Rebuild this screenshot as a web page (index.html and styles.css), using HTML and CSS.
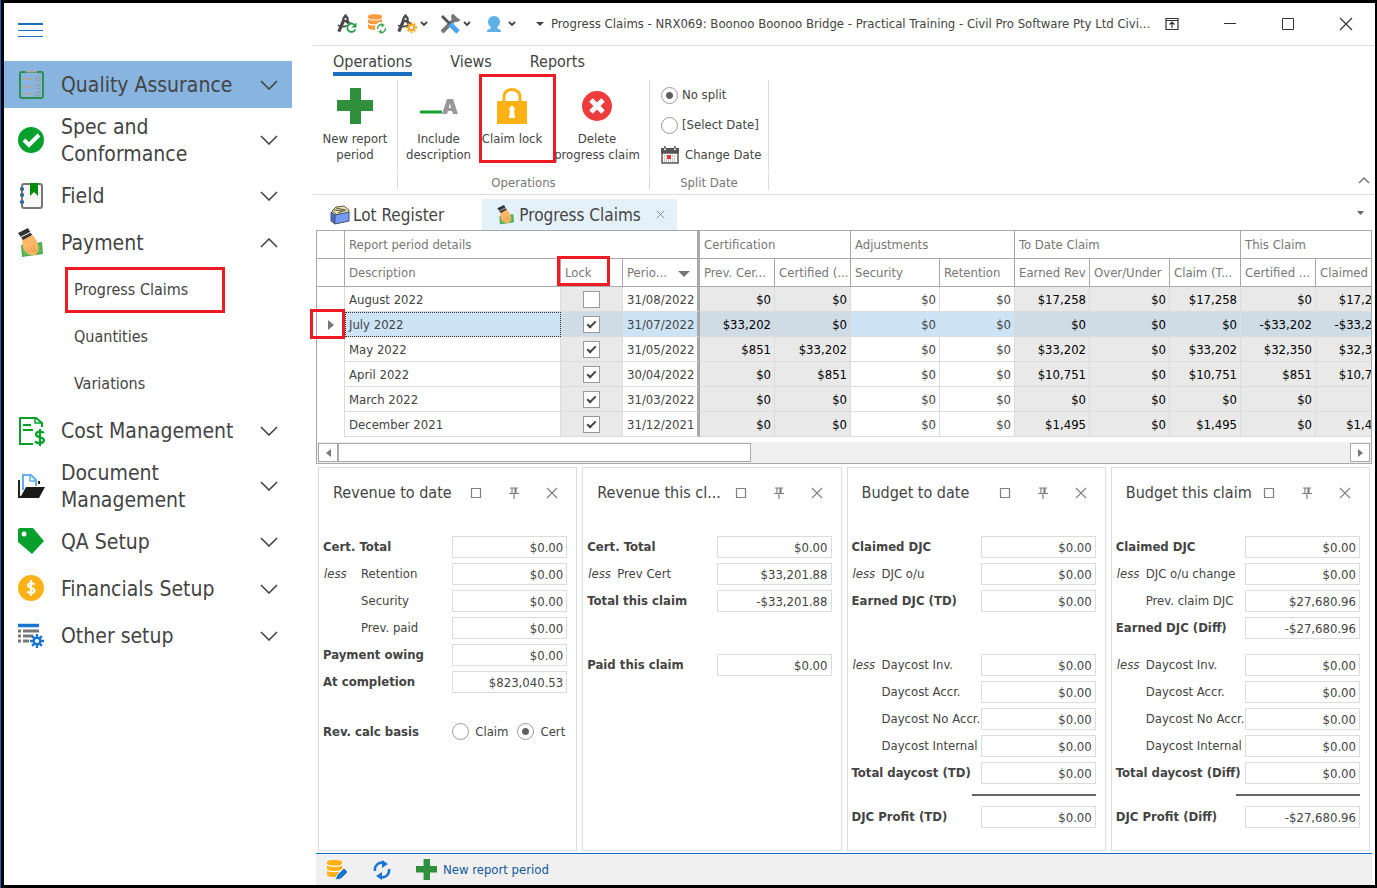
FILE: index.html
```html
<!DOCTYPE html>
<html lang="en">
<head>
  <meta charset="UTF-8">
  <meta name="viewport" content="width=device-width, initial-scale=1.0">
  <title>Progress Claims - Civil Pro</title>
  <link rel="stylesheet" href="styles.css">
</head>
<body>

<!-- Shared icons -->
<svg class="sprite" width="0" height="0">
  <symbol id="chevron" viewBox="0 0 18 10"><path d="M1 1l8 8 8-8" fill="none" stroke="#444" stroke-width="1.6"/></symbol>
  <symbol id="small-chevron" viewBox="0 0 8 6"><path d="M1 1l3 3 3-3" fill="none" stroke="#444" stroke-width="1.8"/></symbol>
  <symbol id="pay" viewBox="0 0 26 30">
    <path d="M3 17l21-3 1 12-21 3z" fill="#4caf50"/>
    <path d="M5 19l17-2 1 7-17 3z" fill="#66bb5a"/>
    <path d="M4 11l9-5c3 2 6 6 7 11 1 5 0 8-3 10-2 1-5 0-7-1l-4-4c-2-3-1-7-2-11z" fill="#ffb868"/>
    <path d="M9 21l3 4M12 19l4 6M15 17l3 7" fill="none" stroke="#e0913d" stroke-width="1"/>
    <path d="M0 5l10-5 4 7-9 5z" fill="#333"/>
    <path d="M3 9l10-5" stroke="#fff" stroke-width="1"/>
  </symbol>
  <symbol id="plus" viewBox="0 0 36 36"><path d="M13 0h11v12h12v11H24v13H13V23H0V12h13z" fill="#2f8f3a"/></symbol>
  <symbol id="max" viewBox="0 0 12 12"><path d="M1.500 1.500h9v9h-9z" fill="none" stroke="#808080" stroke-width="1.200"/></symbol>
  <symbol id="pin" viewBox="0 0 12 12"><path d="M2 1h8M4 1v5M8 1v5M7 1v5M1 6.500h10M6 7v5" fill="none" stroke="#808080" stroke-width="1.200"/></symbol>
  <symbol id="close" viewBox="0 0 12 12"><path d="M1 1l10 10M11 1L1 11" fill="none" stroke="#808080" stroke-width="1.200"/></symbol>
  <symbol id="compass" viewBox="0 0 20 20">
    <path d="M8 5L2 19M10 5l7 12" fill="none" stroke="#4a4a4a" stroke-width="3.600"/>
    <path d="M1 12c4 2 10 2 15-3" fill="none" stroke="#4a4a4a" stroke-width="2"/>
    <path d="M8 0h3v4H8z" fill="#4a4a4a"/>
    <circle cx="9.500" cy="5" r="3.500" fill="#4a4a4a"/><circle cx="9.500" cy="5" r="1.200" fill="#fff"/>
  </symbol>
  <symbol id="cycle" viewBox="0 0 20 20">
    <path d="M3 11a7 7 0 0 1 9-8M17 9a7 7 0 0 1-9 8" fill="none" stroke="currentColor" stroke-width="2.500"/>
    <path d="M10 0l6 4-6 4zM10 20l-6-4 6-4z" fill="currentColor"/>
  </symbol>
  <symbol id="reload" viewBox="0 0 20 20">
    <path d="M15 5a7.500 7.500 0 1 0 2 8" fill="none" stroke="currentColor" stroke-width="3"/>
    <path d="M19 1v9h-9z" fill="currentColor"/>
  </symbol>
  <symbol id="db" viewBox="0 0 16 18">
    <path d="M0 2.500C0 .8 3 0 8 0s8 .8 8 2.500V15c0 2-3 3-8 3s-8-1-8-3z" fill="currentColor"/>
    <path d="M0 4.500c1 3 15 3 16 0M0 10c1 3 15 3 16 0" fill="none" stroke="#fff" stroke-width="1.300"/>
  </symbol>
  <symbol id="gear" viewBox="0 0 20 20">
    <path d="M10 0v20M0 10h20M3 3l14 14M17 3L3 17" stroke="currentColor" stroke-width="3.400"/>
    <circle cx="10" cy="10" r="6.500" fill="currentColor"/><circle cx="10" cy="10" r="3" fill="#fff"/>
  </symbol>
</svg>

<div class="window">

  <nav class="sidebar">
    <button class="menu-btn" aria-label="Menu"><span></span><span></span><span></span></button>
    <ul>
      <li><a href="#" class="item active">
        <svg width="28" height="30" viewBox="0 0 28 30"><rect x="2" y="2" width="23" height="26" rx="2" fill="none" stroke="#2f8f4e" stroke-width="2"/><path d="M8 1.500h11M4 9h11M4 17h11M4 24h11" stroke="#a9a9a9" stroke-width="2"/><path d="M18 7h4v4h-4zM18 14.500h4v4h-4zM18 22h4v4h-4z" fill="none" stroke="#999"/></svg>
        <span>Quality Assurance</span><svg class="arrow"><use href="#chevron"/></svg></a></li>
      <li><a href="#" class="item tall">
        <svg width="28" height="28" viewBox="0 0 28 28"><circle cx="13" cy="14" r="13" fill="#08a02c"/><path d="M6 14l5 5 10-10" fill="none" stroke="#fff" stroke-width="4"/></svg>
        <span>Spec and Conformance</span><svg class="arrow"><use href="#chevron"/></svg></a></li>
      <li><a href="#" class="item">
        <svg width="28" height="28" viewBox="0 0 28 28"><rect x="4" y="2" width="20" height="24" rx="2" fill="#f7f7f7" stroke="#777" stroke-width="2"/><path d="M12 1h8v13l-4-4-4 4z" fill="#078a07"/><path d="M2 7h4M2 13h4M2 20h4" stroke="#31699c" stroke-width="3"/></svg>
        <span>Field</span><svg class="arrow"><use href="#chevron"/></svg></a></li>
      <li><a href="#" class="item">
        <svg width="28" height="30"><use href="#pay" width="26" height="30"/></svg>
        <span>Payment</span><svg class="arrow up"><use href="#chevron"/></svg></a>
        <ul class="sub">
          <li class="marked"><a href="#">Progress Claims</a></li>
          <li><a href="#">Quantities</a></li>
          <li><a href="#">Variations</a></li>
        </ul>
      </li>
      <li><a href="#" class="item">
        <svg width="28" height="30" viewBox="0 0 28 30"><path d="M15 28H2V2h16l6 5v4" fill="none" stroke="#08a02c" stroke-width="2"/><path d="M17 1v6h8" fill="none" stroke="#08a02c" stroke-width="1.500"/><path d="M5 9h8M5 14h10" stroke="#08a02c" stroke-width="2"/><path d="M26 17c-2-2-8-2-8 1.500s8 2 8 5.500-6 4-9 1.500M22 13v17" fill="none" stroke="#08a02c" stroke-width="2.300"/></svg>
        <span>Cost Management</span><svg class="arrow"><use href="#chevron"/></svg></a></li>
      <li><a href="#" class="item tall">
        <svg width="28" height="28" viewBox="0 0 28 28"><path d="M1 8v17h5M21 12V9" fill="none" stroke="#222" stroke-width="2"/><path d="M5 18V3h8l5 5v6" fill="#fff" stroke="#60b0ee" stroke-width="2"/><path d="M12 3v6h6" fill="none" stroke="#60b0ee" stroke-width="1.500"/><path d="M8 15h19l-6 11H2z" fill="#1a1a1a"/></svg>
        <span>Document Management</span><svg class="arrow"><use href="#chevron"/></svg></a></li>
      <li><a href="#" class="item">
        <svg width="28" height="28" viewBox="0 0 28 28"><path fill-rule="evenodd" d="M2 0h13l11 13-12 13L0 14V2c0-1 1-2 2-2zM6 3.500a2.500 2.500 0 1 0 .1 0z" fill="#08a02c"/></svg>
        <span>QA Setup</span><svg class="arrow"><use href="#chevron"/></svg></a></li>
      <li><a href="#" class="item">
        <svg width="28" height="28" viewBox="0 0 28 28"><circle cx="13" cy="13" r="13" fill="#ffb115"/><path d="M16.500 9.500c-2-2-7-1.500-6.500 1 .5 2.500 6.500 2 6.500 5 0 3-5 3-7.500 1M13 5v16" fill="none" stroke="#fff" stroke-width="2.200"/></svg>
        <span>Financials Setup</span><svg class="arrow"><use href="#chevron"/></svg></a></li>
      <li><a href="#" class="item">
        <svg width="28" height="28" viewBox="0 0 28 28"><path d="M0 3.500h21" stroke="#1a75d2" stroke-width="3.500"/><path d="M0 9h3M5 9h16M0 14h3M5 14h10M0 19h3M5 19h6" stroke="#777" stroke-width="3"/><use href="#gear" x="12" y="12" width="14" height="14" color="#1a75d2"/></svg>
        <span>Other setup</span><svg class="arrow"><use href="#chevron"/></svg></a></li>
    </ul>
  </nav>

  <main class="main">
    <header class="titlebar">
      <div class="quick">
        <button aria-label="Sync project"><svg width="20" height="20"><use href="#compass" width="18" height="19"/><circle cx="14" cy="14" r="5" fill="#fff"/><use href="#reload" x="9" y="8" width="11" height="11" color="#1c9c3c"/></svg></button>
        <button aria-label="Refresh data"><svg width="20" height="20"><use href="#db" x="1" y="0" width="14" height="16" color="#ff9a3e"/><circle cx="14" cy="14" r="6" fill="#fff"/><use href="#cycle" x="9" y="9" width="11" height="11" color="#3aa655"/></svg></button>
        <button class="drop" aria-label="Project settings"><svg width="20" height="20"><use href="#compass" width="18" height="19"/><use href="#gear" x="9" y="8" width="11" height="11" color="#f5a623"/></svg><svg class="dd"><use href="#small-chevron"/></svg></button>
        <button class="drop" aria-label="Tools"><svg width="20" height="20" viewBox="0 0 20 20"><path d="M2 18L15 5" stroke="#777" stroke-width="4"/><path d="M13 1c-3 3 2 8 6 5l-2-1-2-2z" fill="#777" stroke="#777" stroke-width="2"/><path d="M2 2l8 8" stroke="#555" stroke-width="3"/><path d="M10 10l8 8" stroke="#4ea5f5" stroke-width="5"/></svg><svg class="dd"><use href="#small-chevron"/></svg></button>
        <button class="drop user" aria-label="User"><svg width="16" height="18" viewBox="0 0 16 18"><path d="M8 1c4 0 6 3 6 6 0 2-1 4-3 5l1 2c2 0 3 1 3 3H1c0-2 1-3 3-3l1-2C3 11 2 9 2 7c0-3 2-6 6-6z" fill="#5fb0e4"/></svg><svg class="dd"><use href="#small-chevron"/></svg></button>
        <button class="more" aria-label="Customise toolbar"><svg width="8" height="5" viewBox="0 0 8 5"><path d="M0 0h8L4 4z" fill="#444"/></svg></button>
      </div>
      <h1>Progress Claims - NRX069: Boonoo Boonoo Bridge - Practical Training - Civil Pro Software Pty Ltd Civi...</h1>
      <div class="win-buttons">
        <button aria-label="Ribbon options"><svg width="14" height="14" viewBox="0 0 14 14"><path d="M1 1.500h12v11H1zM1 3.500h12M7 11V5M4.500 7.500L7 5l2.500 2.500" fill="none" stroke="#333" stroke-width="1.200"/></svg></button>
        <button aria-label="Minimise"><svg width="14" height="14"><path d="M1 6.500h12" stroke="#333"/></svg></button>
        <button aria-label="Maximise"><svg width="14" height="14"><path d="M1.500 1.500h11v11h-11z" fill="none" stroke="#333"/></svg></button>
        <button aria-label="Close"><svg width="14" height="14"><path d="M1 1l12 12M13 1L1 13" stroke="#333" stroke-width="1.200"/></svg></button>
      </div>
    </header>

    <div class="ribbon-tabs">
      <a href="#" class="current">Operations</a>
      <a href="#">Views</a>
      <a href="#">Reports</a>
    </div>

    <section class="ribbon">
      <div class="group g-new">
        <div class="tools">
          <button class="tool"><svg width="36" height="36"><use href="#plus"/></svg>New report<br>period</button>
        </div>
        <div class="caption"></div>
      </div>
      <div class="group g-ops">
        <div class="tools">
          <button class="tool t-include"><svg width="40" height="36" viewBox="0 0 40 36"><path d="M1 24h22" stroke="#16a02c" stroke-width="3"/><path fill-rule="evenodd" d="M28 11h6l5 15h-5l-1-3h-4l-1 3h-5zM31 15l-1 5h2z" fill="#999"/></svg>Include<br>description</button>
          <button class="tool t-lock"><svg width="30" height="36" viewBox="0 0 30 36"><path d="M7 14V9c0-10 16-10 16 0v5" fill="none" stroke="#ffb115" stroke-width="3"/><path d="M1 13h28c1 0 1 0 1 1v21c0 1 0 1-1 1H1c-1 0-1 0-1-1V14c0-1 0-1 1-1z" fill="#ffb115"/><path d="M15 18a3 3 0 0 1 2 5l1 7h-6l1-7a3 3 0 0 1 2-5z" fill="#fff"/></svg>Claim lock</button>
          <button class="tool t-delete"><svg width="30" height="36" viewBox="0 0 30 36"><circle cx="15" cy="18" r="15" fill="#ee3b3b"/><path d="M9 12l12 12M21 12L9 24" stroke="#fff" stroke-width="5"/></svg>Delete<br>progress claim</button>
        </div>
        <div class="caption">Operations</div>
      </div>
      <div class="group g-split">
        <div class="options">
          <label><input type="radio" name="split" checked>No split</label>
          <label><input type="radio" name="split">[Select Date]</label>
          <button><svg width="18" height="18" viewBox="0 0 18 18"><path d="M1 7h16v10H1z" fill="#fff" stroke="#555" stroke-width="1.500"/><path d="M0 2h3v2h2V2h8v2h2V2h3v5H0z" fill="#555"/><path d="M4 0v3M14 0v3" stroke="#555" stroke-width="1.500"/><path d="M3 10h12M3 13h12M3 15h12" stroke="#888" stroke-dasharray="1 1"/><path d="M6 9h4v4H6z" fill="#e33"/></svg>Change Date</button>
        </div>
        <div class="caption">Split Date</div>
      </div>
      <button class="collapse" aria-label="Collapse ribbon"><svg width="12" height="8" viewBox="0 0 12 8"><path d="M1 7l5-5 5 5" fill="none" stroke="#777" stroke-width="1.500"/></svg></button>
    </section>

    <div class="doc-tabs">
      <a href="#" class="doc">
        <svg width="20" height="20" viewBox="0 0 20 20"><path d="M2 6l4-4 8-1 5 4-1 5-8 2z" fill="#f0e0a0" stroke="#555"/><path d="M4 5l9 1M6 3l9 2M8 8l8-3" stroke="#555"/><path d="M1 7l4 3v9l-4-3z" fill="#4a6bd8" stroke="#456"/><path d="M5 10l14-3v9L5 19z" fill="#7399f5" stroke="#456"/></svg>
        Lot Register</a>
      <a href="#" class="doc open">
        <svg width="20" height="20"><use href="#pay"/></svg>
        Progress Claims
        <svg class="x" width="9" height="9"><use href="#close"/></svg></a>
      <button class="doc-more" aria-label="More tabs"><svg width="7" height="4" viewBox="0 0 7 4"><path d="M0 0h7L3.500 4z" fill="#666"/></svg></button>
    </div>

    <div class="claims">
      <div class="grid-clip">
        <table>
          <colgroup>
            <col class="c28"><col class="c216"><col class="c62"><col class="c77"><col class="c75"><col class="c76"><col class="c89"><col class="c75"><col class="c75"><col class="c80"><col class="c71"><col class="c75"><col class="c75">
          </colgroup>
          <thead>
            <tr><th></th><th colspan="3" class="thick">Report period details</th><th colspan="2">Certification</th><th colspan="2">Adjustments</th><th colspan="3">To Date Claim</th><th colspan="2">This Claim</th></tr>
            <tr><th></th><th>Description</th><th>Lock</th><th class="thick">Perio...<svg class="sort" width="12" height="6" viewBox="0 0 12 6"><path d="M0 0h12L6 6z" fill="#777"/></svg></th><th>Prev. Cer...</th><th>Certified (...</th><th>Security</th><th>Retention</th><th>Earned Rev</th><th>Over/Under</th><th>Claim (T...</th><th>Certified ...</th><th>Claimed (...</th></tr>
          </thead>
          <tbody>
            <tr><td></td><td>August 2022</td><td><input type="checkbox" aria-label="Lock August 2022"></td><td>31/08/2022</td><td>$0</td><td>$0</td><td>$0</td><td>$0</td><td>$17,258</td><td>$0</td><td>$17,258</td><td>$0</td><td>$17,258</td></tr>
            <tr class="selected"><td><svg width="6" height="10" viewBox="0 0 6 10"><path d="M0 0l6 5-6 5z" fill="#777"/></svg></td><td>July 2022</td><td><input type="checkbox" aria-label="Lock July 2022" checked></td><td>31/07/2022</td><td>$33,202</td><td>$0</td><td>$0</td><td>$0</td><td>$0</td><td>$0</td><td>$0</td><td>-$33,202</td><td>-$33,202</td></tr>
            <tr><td></td><td>May 2022</td><td><input type="checkbox" aria-label="Lock May 2022" checked></td><td>31/05/2022</td><td>$851</td><td>$33,202</td><td>$0</td><td>$0</td><td>$33,202</td><td>$0</td><td>$33,202</td><td>$32,350</td><td>$32,350</td></tr>
            <tr><td></td><td>April 2022</td><td><input type="checkbox" aria-label="Lock April 2022" checked></td><td>30/04/2022</td><td>$0</td><td>$851</td><td>$0</td><td>$0</td><td>$10,751</td><td>$0</td><td>$10,751</td><td>$851</td><td>$10,751</td></tr>
            <tr><td></td><td>March 2022</td><td><input type="checkbox" aria-label="Lock March 2022" checked></td><td>31/03/2022</td><td>$0</td><td>$0</td><td>$0</td><td>$0</td><td>$0</td><td>$0</td><td>$0</td><td>$0</td><td>$0</td></tr>
            <tr><td></td><td>December 2021</td><td><input type="checkbox" aria-label="Lock December 2021" checked></td><td>31/12/2021</td><td>$0</td><td>$0</td><td>$0</td><td>$0</td><td>$1,495</td><td>$0</td><td>$1,495</td><td>$0</td><td>$1,495</td></tr>
          </tbody>
        </table>
        <div class="scroll">
          <button aria-label="Scroll left"><svg width="5" height="8" viewBox="0 0 5 8"><path d="M5 0v8L0 4z" fill="#777"/></svg></button>
          <div class="thumb"></div>
          <button aria-label="Scroll right"><svg width="5" height="8" viewBox="0 0 5 8"><path d="M0 0v8l5-4z" fill="#777"/></svg></button>
        </div>
      </div>
      <div class="mark mark-lock"></div>
      <div class="mark mark-row"></div>
    </div>

    <div class="panels">
      <section class="panel">
        <div class="panel-head"><h2>Revenue to date</h2><button aria-label="Maximise"><svg><use href="#max"/></svg></button><button aria-label="Pin"><svg><use href="#pin"/></svg></button><button aria-label="Close"><svg><use href="#close"/></svg></button></div>
        <div class="field"><label class="total" for="a1">Cert. Total</label><input id="a1" type="text" value="$0.00" readonly></div>
        <div class="field wide"><i>less</i><label for="a2">Retention</label><input id="a2" type="text" value="$0.00" readonly></div>
        <div class="field wide"><i></i><label for="a3">Security</label><input id="a3" type="text" value="$0.00" readonly></div>
        <div class="field wide"><i></i><label for="a4">Prev. paid</label><input id="a4" type="text" value="$0.00" readonly></div>
        <div class="field"><label class="total" for="a5">Payment owing</label><input id="a5" type="text" value="$0.00" readonly></div>
        <div class="field"><label class="total" for="a6">At completion</label><input id="a6" type="text" value="$823,040.53" readonly></div>
        <div class="basis"><b>Rev. calc basis</b>
          <label><input type="radio" name="basis">Claim</label>
          <label><input type="radio" name="basis" checked>Cert</label>
        </div>
      </section>

      <section class="panel">
        <div class="panel-head"><h2>Revenue this cl...</h2><button aria-label="Maximise"><svg><use href="#max"/></svg></button><button aria-label="Pin"><svg><use href="#pin"/></svg></button><button aria-label="Close"><svg><use href="#close"/></svg></button></div>
        <div class="field"><label class="total" for="b1">Cert. Total</label><input id="b1" type="text" value="$0.00" readonly></div>
        <div class="field"><i>less</i><label for="b2">Prev Cert</label><input id="b2" type="text" value="$33,201.88" readonly></div>
        <div class="field"><label class="total" for="b3">Total this claim</label><input id="b3" type="text" value="-$33,201.88" readonly></div>
        <div class="field space-lg"><label class="total" for="b4">Paid this claim</label><input id="b4" type="text" value="$0.00" readonly></div>
      </section>

      <section class="panel">
        <div class="panel-head"><h2>Budget to date</h2><button aria-label="Maximise"><svg><use href="#max"/></svg></button><button aria-label="Pin"><svg><use href="#pin"/></svg></button><button aria-label="Close"><svg><use href="#close"/></svg></button></div>
        <div class="field"><label class="total" for="c1">Claimed DJC</label><input id="c1" type="text" value="$0.00" readonly></div>
        <div class="field"><i>less</i><label for="c2">DJC o/u</label><input id="c2" type="text" value="$0.00" readonly></div>
        <div class="field"><label class="total" for="c3">Earned DJC (TD)</label><input id="c3" type="text" value="$0.00" readonly></div>
        <div class="field space-lg"><i>less</i><label for="c4">Daycost Inv.</label><input id="c4" type="text" value="$0.00" readonly></div>
        <div class="field"><i></i><label for="c5">Daycost Accr.</label><input id="c5" type="text" value="$0.00" readonly></div>
        <div class="field"><i></i><label for="c6">Daycost No Accr.</label><input id="c6" type="text" value="$0.00" readonly></div>
        <div class="field"><i></i><label for="c7">Daycost Internal</label><input id="c7" type="text" value="$0.00" readonly></div>
        <div class="field"><label class="total" for="c8">Total daycost (TD)</label><input id="c8" type="text" value="$0.00" readonly></div>
        <hr>
        <div class="field"><label class="total" for="c9">DJC Profit (TD)</label><input id="c9" type="text" value="$0.00" readonly></div>
      </section>

      <section class="panel">
        <div class="panel-head"><h2>Budget this claim</h2><button aria-label="Maximise"><svg><use href="#max"/></svg></button><button aria-label="Pin"><svg><use href="#pin"/></svg></button><button aria-label="Close"><svg><use href="#close"/></svg></button></div>
        <div class="field"><label class="total" for="d1">Claimed DJC</label><input id="d1" type="text" value="$0.00" readonly></div>
        <div class="field"><i>less</i><label for="d2">DJC o/u change</label><input id="d2" type="text" value="$0.00" readonly></div>
        <div class="field"><i></i><label for="d3">Prev. claim DJC</label><input id="d3" type="text" value="$27,680.96" readonly></div>
        <div class="field"><label class="total" for="d4">Earned DJC (Diff)</label><input id="d4" type="text" value="-$27,680.96" readonly></div>
        <div class="field space-sm"><i>less</i><label for="d5">Daycost Inv.</label><input id="d5" type="text" value="$0.00" readonly></div>
        <div class="field"><i></i><label for="d6">Daycost Accr.</label><input id="d6" type="text" value="$0.00" readonly></div>
        <div class="field"><i></i><label for="d7">Daycost No Accr.</label><input id="d7" type="text" value="$0.00" readonly></div>
        <div class="field"><i></i><label for="d8">Daycost Internal</label><input id="d8" type="text" value="$0.00" readonly></div>
        <div class="field"><label class="total" for="d9">Total daycost (Diff)</label><input id="d9" type="text" value="$0.00" readonly></div>
        <hr>
        <div class="field"><label class="total" for="d10">DJC Profit (Diff)</label><input id="d10" type="text" value="-$27,680.96" readonly></div>
      </section>
    </div>

    <footer class="statusbar">
      <button aria-label="Edit data"><svg width="22" height="22"><use href="#db" x="1" y="1" width="15" height="17" color="#ffb115"/><path d="M9 21l2-5 7-7 4 4-7 7z" fill="#1a75d2" stroke="#f0f0f0"/></svg></button>
      <button aria-label="Refresh"><svg width="20" height="20" color="#1a75d2"><use href="#cycle"/></svg></button>
      <button class="new"><svg width="21" height="21"><use href="#plus"/></svg>New report period</button>
    </footer>
  </main>
</div>

</body>
</html>
```
FILE: styles.css
```css
*, *::before, *::after {
  box-sizing: border-box;
}
body {
  margin: 0;
  background-color: #0f6cbd;
  color: #444;
  font-family: "DejaVu Sans Condensed", "Noto Sans", sans-serif;
  font-size: 13px;
  line-height: 16px;
}
a {
  color: inherit;
  text-decoration: none;
}
ul {
  list-style: none;
  margin: 0;
  padding: 0;
}
button {
  background: none;
  border: none;
  padding: 0;
  color: inherit;
  font: inherit;
  cursor: pointer;
}
svg {
  display: block;
  flex: none;
}
.sprite {
  position: absolute;
}
.window {
  display: flex;
  min-height: 100vh;
  margin-left: 1px;
  background-color: white;
  border: 3px solid black;
  border-right-width: 2px;
}

/* Left menu */
.sidebar {
  flex: none;
  width: 309px;
  padding-right: 21px;
}
.menu-btn {
  display: flex;
  flex-direction: column;
  gap: 5px;
  width: 25px;
  margin: 20px 0 24px 14px;
}
.menu-btn span {
  height: 1px;
  width: 25px;
  background-color: #1a6fc0;
}
.menu-btn span:first-child {
  height: 2px;
}
.item {
  display: flex;
  align-items: center;
  height: 47px;
  padding: 0 14px;
  font-size: 21px;
  line-height: 27px;
}
.item.tall {
  height: 64px;
}
.item.active {
  background-color: #87b5df;
}
.item span {
  flex: 1;
  margin-left: 15px;
  padding-top: 2px;
}
.arrow {
  width: 18px;
  height: 10px;
}
.arrow.up {
  transform: rotate(180deg);
}
.sub a {
  display: flex;
  align-items: center;
  height: 47px;
  padding-left: 70px;
  font-size: 16px;
}
.marked {
  position: relative;
}
.marked::after {
  content: "";
  position: absolute;
  left: 61px;
  top: 1px;
  width: 160px;
  height: 46px;
  border: 3px solid #ed1c24;
}

.main {
  flex: 1;
  min-width: 0;
  display: flex;
  flex-direction: column;
}

/* Title bar */
.titlebar {
  display: flex;
  align-items: center;
  height: 43px;
  padding-left: 24px;
  border-bottom: 1px solid #dcdcdc;
}
.quick {
  display: flex;
  align-items: center;
  gap: 10px;
}
.quick .drop {
  display: flex;
  align-items: center;
  gap: 3px;
  margin-right: 2px;
}
.quick .user {
  margin: 0 10px 0 3px;
  gap: 6px;
}
.dd {
  width: 8px;
  height: 6px;
}
.titlebar h1 {
  flex: 1;
  min-width: 0;
  overflow: hidden;
  margin: 0 0 0 7px;
  font-size: 13px;
  font-weight: normal;
  white-space: nowrap;
}
.win-buttons {
  display: flex;
  gap: 44px;
  padding-right: 22px;
}

/* Ribbon */
.ribbon-tabs {
  display: flex;
  gap: 38px;
  height: 34px;
  padding: 8px 0 0 20px;
  font-size: 16px;
}
.ribbon-tabs a {
  height: 22px;
}
.ribbon-tabs .current {
  border-bottom: 4px solid #1a6fc0;
}
.ribbon {
  display: flex;
  height: 115px;
  padding-bottom: 4px;
  border-bottom: 1px solid #dcdcdc;
}
.group {
  display: flex;
  flex-direction: column;
  gap: 1px;
  text-align: center;
}
.g-new {
  width: 85px;
}
.g-ops {
  width: 252px;
}
.g-split {
  width: 119px;
}
.tools, .options {
  flex: 1;
  border-right: 1px solid #dcdcdc;
}
.tools {
  display: flex;
  padding-top: 8px;
}
.caption {
  height: 17px;
  border-right: 1px solid #dcdcdc;
  color: #777;
  line-height: 20px;
}
.tool {
  display: flex;
  flex-direction: column;
  align-items: center;
  white-space: nowrap;
}
.tool svg {
  margin-bottom: 7px;
}
.g-new .tool {
  width: 84px;
}
.t-include {
  width: 81px;
}
.t-lock {
  position: relative;
  width: 66px;
}
.t-lock::after {
  content: "";
  position: absolute;
  left: 0;
  top: -14px;
  width: 77px;
  height: 89px;
  border: 3px solid #ed1c24;
}
.t-delete {
  width: 104px;
}
.options {
  display: flex;
  flex-direction: column;
  gap: 12px;
  padding: 6px 0 0 11px;
}
.options label, .options button {
  display: flex;
  align-items: center;
  height: 18px;
  gap: 4px;
  white-space: nowrap;
}
.options button {
  gap: 6px;
}
input[type="radio"] {
  appearance: none;
  flex: none;
  width: 17px;
  height: 17px;
  margin: 0;
  border: 1px solid #999;
  border-radius: 50%;
  background-color: white;
}
input[type="radio"]:checked {
  background-image: radial-gradient(circle, #606060 3px, transparent 4px);
}
.collapse {
  align-self: flex-end;
  margin-left: auto;
  padding: 0 5px 6px 0;
}

/* Document tabs */
.doc-tabs {
  display: flex;
  gap: 24px;
  padding: 4px 0 0 3px;
  font-size: 17px;
}
.doc {
  display: flex;
  align-items: center;
  gap: 3px;
  height: 31px;
  padding: 0 14px;
}
.doc.open {
  background-color: #e5f1fa;
  padding-right: 12px;
}
.doc .x {
  margin-left: 12px;
}
.doc-more {
  margin-left: auto;
  padding: 0 11px 4px 0;
}

/* Claims grid */
.claims {
  position: relative;
  margin: 0 3px;
}
.grid-clip {
  overflow: hidden;
  border: 1px solid #a9a9a9;
}
table {
  width: 1074px;
  table-layout: fixed;
  border-collapse: separate;
  border-spacing: 0;
}
.c28 { width: 28px; }
.c216 { width: 216px; }
.c62 { width: 62px; }
.c71 { width: 71px; }
.c75 { width: 75px; }
.c76 { width: 76px; }
.c77 { width: 77px; }
.c80 { width: 80px; }
.c89 { width: 89px; }
th {
  height: 28px;
  padding: 0 4px;
  border-right: 1px solid #a9a9a9;
  border-bottom: 1px solid #a9a9a9;
  color: #777;
  font-weight: normal;
  text-align: left;
  white-space: nowrap;
}
.sort {
  float: right;
  margin: 6px 3px 0 0;
}
td {
  height: 25px;
  padding: 1px 3px 0;
  border-right: 1px solid #dcdcdc;
  border-bottom: 1px solid #dcdcdc;
  background-color: #e9e9e9;
  color: black;
  text-align: right;
  white-space: nowrap;
}
td:nth-child(2), td:nth-child(4), td:nth-child(7), td:nth-child(8) {
  background-color: white;
  color: #444;
}
td:nth-child(2), td:nth-child(4) {
  padding-left: 4px;
  text-align: left;
}
td:nth-child(3) {
  padding-top: 0;
}
th.thick, td:nth-child(4) {
  border-right: 3px solid #a9a9a9;
}
.selected td {
  background-color: #d0dce5;
}
.selected td:nth-child(2), .selected td:nth-child(4), .selected td:nth-child(7), .selected td:nth-child(8) {
  background-color: #cde4f7;
}
.selected td:nth-child(2) {
  outline: 1px dotted #333;
  outline-offset: -1px;
}
td:first-child, .selected td:first-child {
  padding-left: 11px;
  border-bottom: none;
  background-color: white;
}
input[type="checkbox"] {
  appearance: none;
  display: block;
  width: 17px;
  height: 17px;
  margin: 0 auto;
  border: 1px solid #999;
  background-color: white;
}
input[type="checkbox"]:checked::before {
  content: "";
  display: block;
  width: 5px;
  height: 9px;
  margin: 2px 0 0 5px;
  border: solid #444;
  border-width: 0 2px 2px 0;
  transform: rotate(45deg);
}
.scroll {
  display: flex;
  height: 21px;
  margin-top: 5px;
  padding: 1px;
  background-color: #f0f0f0;
}
.scroll button {
  display: flex;
  align-items: center;
  justify-content: center;
  width: 20px;
  border: 1px solid #a9a9a9;
  background-color: white;
}
.scroll button:last-child {
  margin-left: auto;
}
.thumb {
  width: 40%;
  max-width: 413px;
  border: 1px solid #a9a9a9;
  background-color: white;
}
.mark {
  position: absolute;
  border: 3px solid #ed1c24;
}
.mark-lock {
  left: 241px;
  top: 26px;
  width: 53px;
  height: 30px;
}
.mark-row {
  left: -6px;
  top: 79px;
  width: 35px;
  height: 30px;
}

/* Summary panels */
.panels {
  flex: 1;
  display: grid;
  grid-template-columns: repeat(4, 1fr);
  gap: 5px;
  margin: 3px 5px 2px;
}
.panel {
  min-width: 0;
  padding: 0 9px 12px 4px;
  border: 1px solid #dcdcdc;
}
.panel-head {
  display: flex;
  align-items: center;
  height: 50px;
  margin-bottom: 18px;
  padding: 0 9px 0 10px;
}
.panel-head h2 {
  flex: 1;
  min-width: 0;
  margin: 0;
  font-size: 16px;
  font-weight: normal;
  white-space: nowrap;
}
.panel-head button {
  margin-left: 26px;
}
.panel-head h2 + button {
  margin-left: 0;
}
.panel-head svg {
  width: 12px;
  height: 12px;
}
.field {
  display: flex;
  align-items: center;
  margin-bottom: 5px;
}
.field label {
  flex: 1;
  min-width: 0;
  white-space: nowrap;
}
.field i {
  width: 30px;
  padding-left: 1px;
}
.field.wide i {
  width: 38px;
}
.total, .basis b {
  font-weight: bold;
}
.field input {
  width: 115px;
  height: 22px;
  padding: 0 3px;
  border: 1px solid #dcdcdc;
  background-color: white;
  color: #444;
  font: inherit;
  text-align: right;
}
.space-lg {
  margin-top: 42px;
}
.space-sm {
  margin-top: 15px;
}
.basis {
  display: flex;
  align-items: center;
  gap: 9px;
  margin-top: 30px;
  padding-right: 2px;
}
.basis b {
  flex: 1;
}
.basis label {
  display: flex;
  align-items: center;
  gap: 6px;
}
.panel hr {
  width: 124px;
  height: 2px;
  margin: 10px 0 10px auto;
  border: none;
  background-color: #666;
}

/* Bottom bar */
.statusbar {
  display: flex;
  align-items: center;
  gap: 24px;
  height: 32px;
  margin: 0 3px;
  padding-left: 10px;
  border-top: 1px solid #1a6fc0;
  background-color: #f0f0f0;
}
.statusbar .new {
  display: flex;
  align-items: center;
  gap: 6px;
  color: #12599c;
}
```
